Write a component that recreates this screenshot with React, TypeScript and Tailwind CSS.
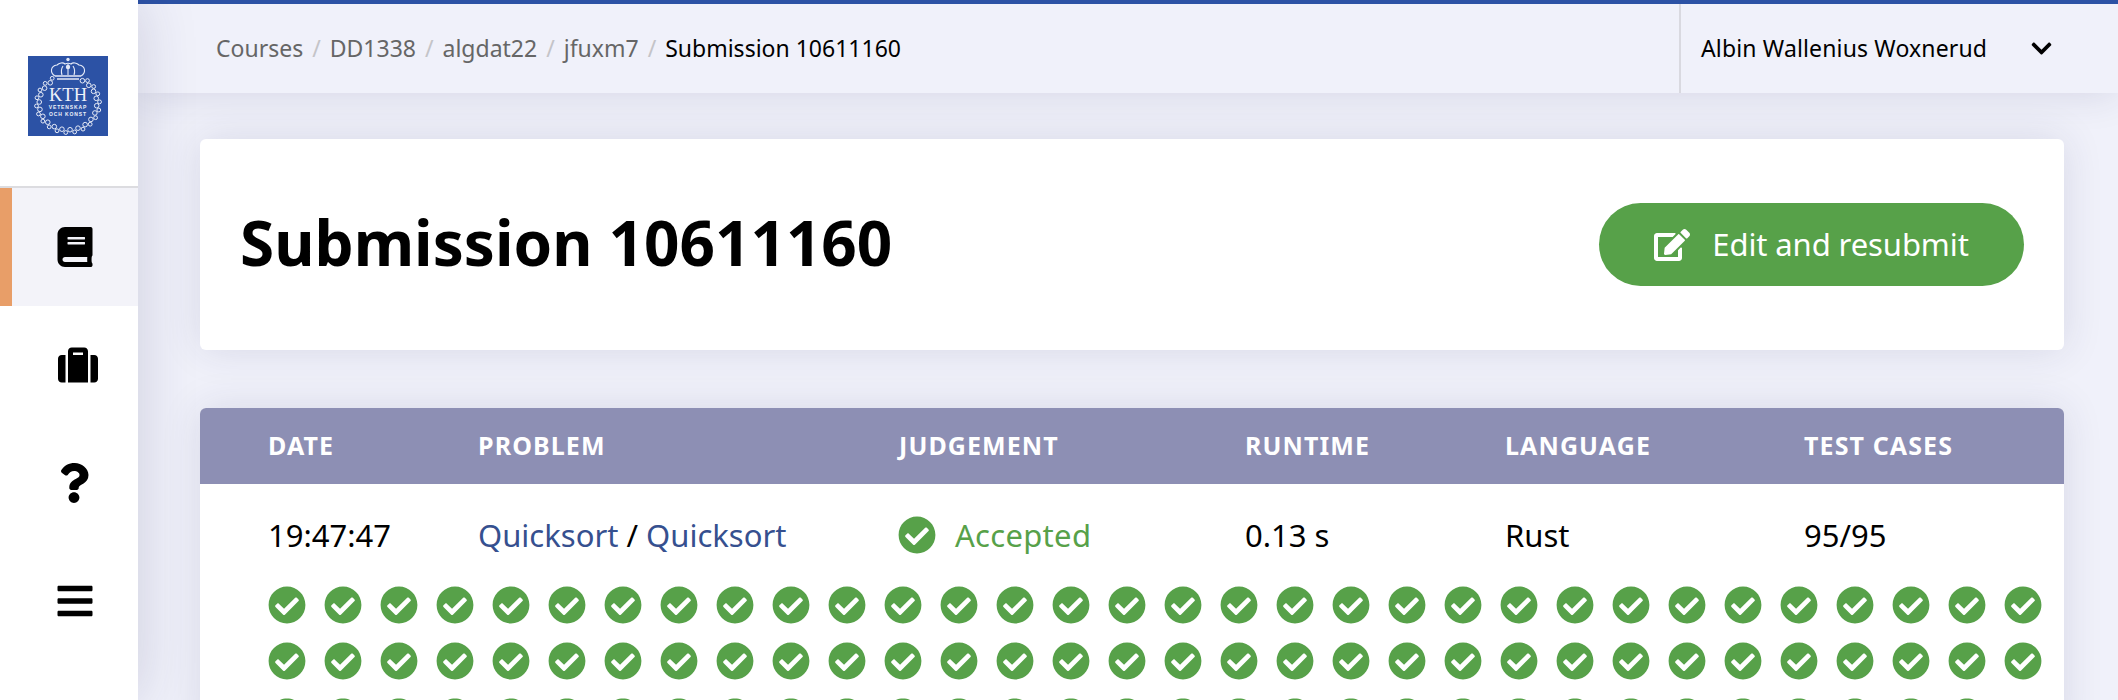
import { FaBars, FaBook, FaCheckCircle, FaChevronDown, FaEdit, FaQuestion, FaSuitcase } from "react-icons/fa";

const crumbs = ["Courses", "DD1338", "algdat22", "jfuxm7"];
const testCases = Array.from({ length: 95 }, (_, i) => i);

// wreath lobes around the KTH text, open at the top under the crown
const beads = Array.from({ length: 38 }, (_, i) => {
    const angle = ((30 + (i * 300) / 37) * Math.PI) / 180;
    const spread = i % 2 === 1 ? 1.6 : -1.2;
    return {
        x: 40 + Math.sin(angle) * (30 + spread),
        y: 47.5 - Math.cos(angle) * (27.5 + spread),
        odd: i % 2 === 1,
    };
});

function KthLogo() {
    return (
        <svg width="80" height="80" viewBox="0 0 80 80" className="block">
            <rect width="80" height="80" fill="#2c52a5" />
            <g fill="none" stroke="#e3e9f7" strokeWidth="1.1">
                <path d="M27 20c-5-3-5-10 2-11 2-2 6-3 8-1 2-1 4-1 6 0 2-2 6-1 8 1 7 1 7 8 2 11" />
                <path d="M27 20h26M29 23h22" strokeWidth="1.6" />
                <path d="M34 19c-1-3-1-6 1-9M46 19c1-3 1-6-1-9M40 19V8" />
            </g>
            <circle cx="40" cy="3.5" r="1.7" fill="#e3e9f7" />
            <circle cx="40" cy="11" r="2.2" fill="#e3e9f7" />
            <g fill="none" stroke="#e6ebf7" strokeWidth="1">
                {beads.map((b, i) => (
                    <circle key={i} cx={b.x} cy={b.y} r={b.odd ? 1.9 : 2.3} />
                ))}
            </g>
            <text x="40" y="45" textAnchor="middle" fill="#eef1fa" fontSize="18.5" fontFamily="'Liberation Serif', serif">KTH</text>
            <text x="40" y="53" textAnchor="middle" fill="#eef1fa" fontSize="5" fontWeight="700" letterSpacing="0.9" fontFamily="'Liberation Sans', sans-serif">VETENSKAP</text>
            <text x="40" y="60" textAnchor="middle" fill="#eef1fa" fontSize="5" fontWeight="700" letterSpacing="0.9" fontFamily="'Liberation Sans', sans-serif">OCH KONST</text>
        </svg>
    );
}

function Sidebar() {
    return (
        <aside className="relative z-20 w-[138px] shrink-0 bg-white shadow-[0_0_60px_rgba(40,40,90,0.18)]">
            <div className="h-[188px] border-b-2 border-[#dcdce0] pl-[28px] pt-[56px]">
                <KthLogo />
            </div>
            <div className="flex h-[118px] items-center border-l-[12px] border-[#e89e68] bg-[#f3f3f9] pl-[43px]">
                <FaBook className="text-[40px] text-black" />
            </div>
            <div className="flex h-[118px] items-center pl-[58px]">
                <FaSuitcase className="text-[40px] text-black" />
            </div>
            <div className="flex h-[118px] items-center pl-[54px]">
                <FaQuestion className="text-[40px] text-black" />
            </div>
            <div className="flex h-[118px] items-center pl-[55px]">
                <FaBars className="text-[40px] text-black" />
            </div>
        </aside>
    );
}

function Header() {
    return (
        <header className="relative z-10 flex h-[93px] shrink-0 border-t-4 border-[#2c52a5] bg-[#f0f1fa] shadow-[0_0_40px_rgba(40,40,90,0.14)]">
            <nav className="flex flex-1 items-center gap-[9px] pl-[78px] text-[23px]">
                {crumbs.map((crumb) => (
                    <span key={crumb} className="flex items-center gap-[9px]">
                        <span className="text-[#666666]">{crumb}</span>
                        <span className="text-[#c4c4c8]">/</span>
                    </span>
                ))}
                <span className="text-black">Submission 10611160</span>
            </nav>
            <div className="flex w-[439px] items-center border-l-2 border-[#d9d9e0] pl-[20px] text-[23px] tracking-[0.15px] text-black">
                <span>Albin Wallenius Woxnerud</span>
                <FaChevronDown className="ml-[43px] text-[23px]" />
            </div>
        </header>
    );
}

function App() {
    return (
        <div className="flex h-[700px] overflow-hidden bg-[#f0f1fa] font-['Noto_Sans',sans-serif]">
            <Sidebar />
            <div className="flex min-w-0 flex-1 flex-col">
                <Header />
                <main className="flex flex-col gap-[58px] pl-[62px] pr-[54px] pt-[46px]">
                    <section className="flex h-[211px] items-center justify-between rounded-md bg-white pl-[40px] pr-[40px] shadow-[0_0_40px_rgba(40,40,90,0.12)]">
                        <h1 className="pb-[4px] text-[62px] font-bold text-black">Submission 10611160</h1>
                        <button className="flex h-[83px] w-[425px] items-center justify-center gap-[22px] rounded-full bg-[#57a149] text-[31px] tracking-[-0.1px] text-white">
                            <FaEdit className="text-[36px]" />
                            <span>Edit and resubmit</span>
                        </button>
                    </section>

                    <section className="rounded-md bg-white shadow-[0_0_40px_rgba(40,40,90,0.12)]">
                        <div className="grid h-[76px] grid-cols-[210px_421px_346px_260px_299px_1fr] items-center rounded-t-md bg-[#8d8fb4] pb-px pl-[68px] text-[25px] font-bold tracking-[1.1px] text-white">
                            <span>DATE</span>
                            <span>PROBLEM</span>
                            <span>JUDGEMENT</span>
                            <span>RUNTIME</span>
                            <span>LANGUAGE</span>
                            <span>TEST CASES</span>
                        </div>
                        <div className="grid h-[102px] grid-cols-[210px_421px_346px_260px_299px_1fr] items-center pl-[68px] text-[31px] text-black">
                            <span>19:47:47</span>
                            <span>
                                <span className="text-[#36508f]">Quicksort</span> / <span className="text-[#36508f]">Quicksort</span>
                            </span>
                            <span className="-ml-[1px] flex items-center gap-[19px] tracking-[0.3px] text-[#57a149]">
                                <FaCheckCircle className="text-[38px]" />
                                Accepted
                            </span>
                            <span>0.13 s</span>
                            <span>Rust</span>
                            <span>95/95</span>
                        </div>
                        <div className="grid grid-cols-[repeat(32,38px)] gap-[18px] pl-[68px]">
                            {testCases.map((t) => (
                                <FaCheckCircle key={t} className="text-[38px] text-[#57a149]" />
                            ))}
                        </div>
                    </section>
                </main>
            </div>
        </div>
    );
}

export default App;
